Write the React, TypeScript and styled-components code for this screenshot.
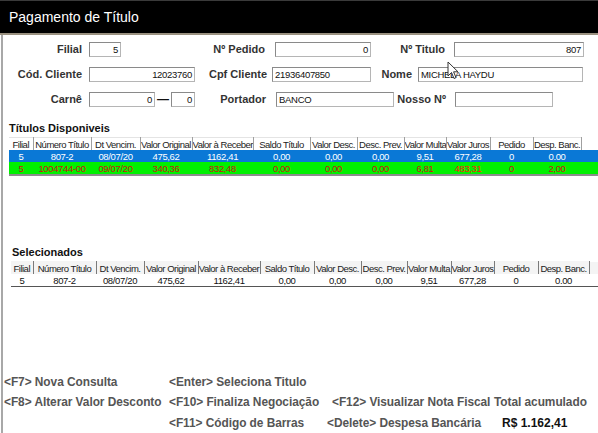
import React from "react";
import styled, { createGlobalStyle } from "styled-components";

type Cell = { key: string; width: number; header: string };

const availableCols: Cell[] = [
  { key: "filial", width: 24, header: "Filial" },
  { key: "numero", width: 58, header: "Número Título" },
  { key: "venc", width: 49, header: "Dt Vencim." },
  { key: "original", width: 52, header: "Valor Original" },
  { key: "receber", width: 61, header: "Valor à Receber" },
  { key: "saldo", width: 57, header: "Saldo Título" },
  { key: "desc", width: 47, header: "Valor Desc." },
  { key: "prev", width: 47, header: "Desc. Prev." },
  { key: "multa", width: 42, header: "Valor Multa" },
  { key: "juros", width: 44, header: "Valor Juros" },
  { key: "pedido", width: 43, header: "Pedido" },
  { key: "banc", width: 48, header: "Desp. Banc." },
];

const selectedWidths = [22, 63, 48, 54, 62, 54, 47, 46, 44, 43, 44, 51];

const available = [
  { tone: "blue", values: ["5", "807-2", "08/07/20", "475,62", "1162,41", "0,00", "0,00", "0,00", "9,51", "677,28", "0", "0.00"] },
  { tone: "green", values: ["5", "1004744-00", "09/07/20", "340,36", "832,48", "0,00", "0,00", "0,00", "6,81", "483,31", "0", "2,00"] },
];

const selected = [["5", "807-2", "08/07/20", "475,62", "1162,41", "0,00", "0,00", "0,00", "9,51", "677,28", "0", "0.00"]];

const GlobalStyle = createGlobalStyle`
  html, body {
    margin: 0;
    padding: 0;
    background: #ffffff;
  }
  body {
    font-family: "Liberation Sans", Arial, sans-serif;
    width: 598px;
    height: 433px;
    overflow: hidden;
  }
`;

const App: React.FC = () => {
  return (
    <>
      <GlobalStyle />
      <Window>
        <TitleBar>Pagamento de Título</TitleBar>
        <Body>
          <Form>
            <FormRow>
              <Label $w={82}>Filial</Label>
              <Field $ml={7} $w={32}>5</Field>
              <Label $w={144}>Nº Pedido</Label>
              <Field $ml={10} $w={96}>0</Field>
              <Label $w={74}>Nº Titulo</Label>
              <Field $ml={9} $w={130}>807</Field>
            </FormRow>
            <FormRow>
              <Label $w={82}>Cód. Cliente</Label>
              <Field $ml={7} $w={106}>12023760</Field>
              <Label $w={72}>Cpf Cliente</Label>
              <Field $ml={5} $w={99} $left>21936407850</Field>
              <Label $w={41}>Nome</Label>
              <Field $ml={6} $w={165} $left>MICHELA HAYDU</Field>
            </FormRow>
            <FormRow>
              <Label $w={82}>Carnê</Label>
              <Field $ml={7} $w={66}>0</Field>
              <Dash>—</Dash>
              <Field $w={24}>0</Field>
              <Label $w={71}>Portador</Label>
              <Field $ml={10} $w={118} $left>BANCO</Field>
              <Label $w={52}>Nosso Nº</Label>
              <Field $ml={9} $w={98} $left></Field>
            </FormRow>
            <Cursor width="12" height="19" viewBox="0 0 12 19">
              <path d="M1 1 L1 15 L4.5 11.5 L7 17.5 L9 16.6 L6.6 10.8 L11 10.8 Z" fill="#ffffff" stroke="#333" strokeWidth="1" />
            </Cursor>
          </Form>

          <SectionTitle $top={14} $left={6}>Títulos Disponiveis</SectionTitle>
          <Grid $left={6}>
            <colgroup>
              {availableCols.map(c => (
                <col key={c.key} style={{ width: c.width }} />
              ))}
              <col />
            </colgroup>
            <thead>
              <tr>
                {availableCols.map(c => (
                  <HeadCell key={c.key}>{c.header}</HeadCell>
                ))}
                <HeadFill />
              </tr>
            </thead>
            <tbody>
              {available.map((row, i) => (
                <Row key={i} $tone={row.tone}>
                  {row.values.map((v, j) => (
                    <DataCell key={j} $bright={row.tone === "green" && j === 9}>{v}</DataCell>
                  ))}
                  <DataCell />
                </Row>
              ))}
            </tbody>
          </Grid>
          <GridBottom />

          <SectionTitle $top={69} $left={9}>Selecionados</SectionTitle>
          <Grid $left={8} $plain>
            <colgroup>
              {selectedWidths.map((w, i) => (
                <col key={i} style={{ width: w }} />
              ))}
              <col />
            </colgroup>
            <thead>
              <tr>
                {availableCols.map(c => (
                  <HeadCell key={c.key} $plain>{c.header}</HeadCell>
                ))}
                <HeadFill $plain />
              </tr>
            </thead>
            <tbody>
              {selected.map((row, i) => (
                <Row key={i} $tone="white">
                  {row.map((v, j) => (
                    <DataCell key={j}>{v}</DataCell>
                  ))}
                  <DataCell $blank />
                </Row>
              ))}
            </tbody>
          </Grid>
          <SelectedBottom />

          <Shortcuts>
            <Shortcut>&lt;F7&gt; Nova Consulta</Shortcut>
            <Shortcut>&lt;Enter&gt; Seleciona Titulo</Shortcut>
            <Shortcut />
            <Shortcut />
            <Shortcut>&lt;F8&gt; Alterar Valor Desconto</Shortcut>
            <Shortcut>&lt;F10&gt; Finaliza Negociação</Shortcut>
            <Shortcut>&lt;F12&gt; Visualizar Nota Fiscal</Shortcut>
            <Shortcut>Total acumulado</Shortcut>
            <Shortcut />
            <Shortcut>&lt;F11&gt; Código de Barras</Shortcut>
            <Shortcut $shift={-5}>&lt;Delete&gt; Despesa Bancária</Shortcut>
            <Total>R$ 1.162,41</Total>
          </Shortcuts>
        </Body>
      </Window>
    </>
  );
};

const Window = styled.div`
  width: 598px;
  height: 433px;
  display: flex;
  flex-direction: column;
  background: #ffffff;
`;

const TitleBar = styled.div`
  height: 32px;
  background: #000000;
  border-top: 1px solid #3a3a3a;
  border-bottom: 2px solid #9a9180;
  color: #ffffff;
  font-size: 14px;
  line-height: 32px;
  padding-left: 9px;
  flex-shrink: 0;
`;

const Body = styled.div`
  flex: 1;
  margin-left: 1px;
  border-left: 2px solid #a8a8a8;
  display: flex;
  flex-direction: column;
`;

const Form = styled.div`
  position: relative;
  display: flex;
  flex-direction: column;
  gap: 9px;
  padding-top: 6px;
  margin-left: -3px;
`;

const FormRow = styled.div`
  display: flex;
  align-items: center;
  height: 16px;
`;

const Label = styled.div<{ $w: number }>`
  width: ${p => p.$w}px;
  flex-shrink: 0;
  text-align: right;
  font-size: 11px;
  font-weight: bold;
  color: #333333;
  white-space: nowrap;
`;

const Field = styled.div<{ $w: number; $ml?: number; $left?: boolean }>`
  box-sizing: border-box;
  width: ${p => p.$w}px;
  margin-left: ${p => p.$ml ?? 0}px;
  height: 15px;
  flex-shrink: 0;
  border: 1px solid #8a8a8a;
  border-right-color: #b5b5b5;
  border-bottom-color: #b5b5b5;
  background: #ffffff;
  font-size: 9.5px;
  letter-spacing: -0.3px;
  line-height: 13px;
  color: #111111;
  padding: 0 2px;
  text-align: ${p => (p.$left ? "left" : "right")};
  white-space: nowrap;
  overflow: hidden;
`;

const Dash = styled.div`
  width: 16px;
  flex-shrink: 0;
  text-align: center;
  font-size: 12px;
  font-weight: bold;
  color: #111111;
`;

const Cursor = styled.svg`
  position: absolute;
  left: 447px;
  top: 26px;
`;

const SectionTitle = styled.div<{ $top: number; $left: number }>`
  margin-top: ${p => p.$top}px;
  margin-left: ${p => p.$left}px;
  font-size: 11px;
  font-weight: bold;
  color: #111111;
  height: 14px;
  line-height: 14px;
`;

const Grid = styled.table<{ $left: number; $plain?: boolean }>`
  margin-left: ${p => p.$left}px;
  width: calc(100% - ${p => p.$left}px);
  table-layout: fixed;
  border-collapse: collapse;
  font-size: 9.5px;
  letter-spacing: -0.35px;
  margin-top: 2px;
`;

const HeadCell = styled.th<{ $plain?: boolean }>`
  height: 12px;
  padding: 0;
  font-weight: normal;
  letter-spacing: -0.5px;
  color: #222222;
  background: ${p => (p.$plain ? "#f4f4f4" : "#ffffff")};
  border-right: 1px solid ${p => (p.$plain ? "#7a7a7a" : "#a0a0a0")};
  border-top: 1px solid ${p => (p.$plain ? "#f4f4f4" : "#e4e4e4")};
  text-align: center;
  white-space: nowrap;
  overflow: hidden;
  line-height: 11px;
`;

const HeadFill = styled.th<{ $plain?: boolean }>`
  padding: 0;
  background: ${p => (p.$plain ? "#f4f4f4" : "#ffffff")};
`;

const rowTone: Record<string, { bg: string; fg: string }> = {
  blue: { bg: "#0a78d6", fg: "#ffffff" },
  green: { bg: "#00f000", fg: "#c81010" },
  white: { bg: "#ffffff", fg: "#111111" },
};

const Row = styled.tr<{ $tone: string }>`
  background: ${p => rowTone[p.$tone].bg};
  color: ${p => rowTone[p.$tone].fg};
`;

const DataCell = styled.td<{ $bright?: boolean; $blank?: boolean }>`
  height: 12px;
  padding: 0;
  text-align: center;
  white-space: nowrap;
  overflow: hidden;
  line-height: 11px;
  color: ${p => (p.$bright ? "#ff1010" : "inherit")};
`;

const GridBottom = styled.div`
  margin-left: 6px;
  height: 2px;
  background: #8c8c8c;
`;

const SelectedBottom = styled.div`
  margin-left: 8px;
  height: 1px;
  background: #555555;
`;

const Shortcuts = styled.div`
  margin-top: auto;
  margin-left: 1px;
  display: grid;
  grid-template-columns: 165px 163px 162px 1fr;
  grid-template-rows: 21px 20px 21px;
  align-items: center;
`;

const Shortcut = styled.div<{ $shift?: number }>`
  margin-left: ${p => p.$shift ?? 0}px;
  font-size: 11.9px;
  letter-spacing: -0.05px;
  font-weight: bold;
  color: #555555;
  white-space: nowrap;
`;

const Total = styled.div`
  margin-left: 8px;
  font-size: 12px;
  font-weight: bold;
  color: #111111;
  white-space: nowrap;
`;

export default App;
